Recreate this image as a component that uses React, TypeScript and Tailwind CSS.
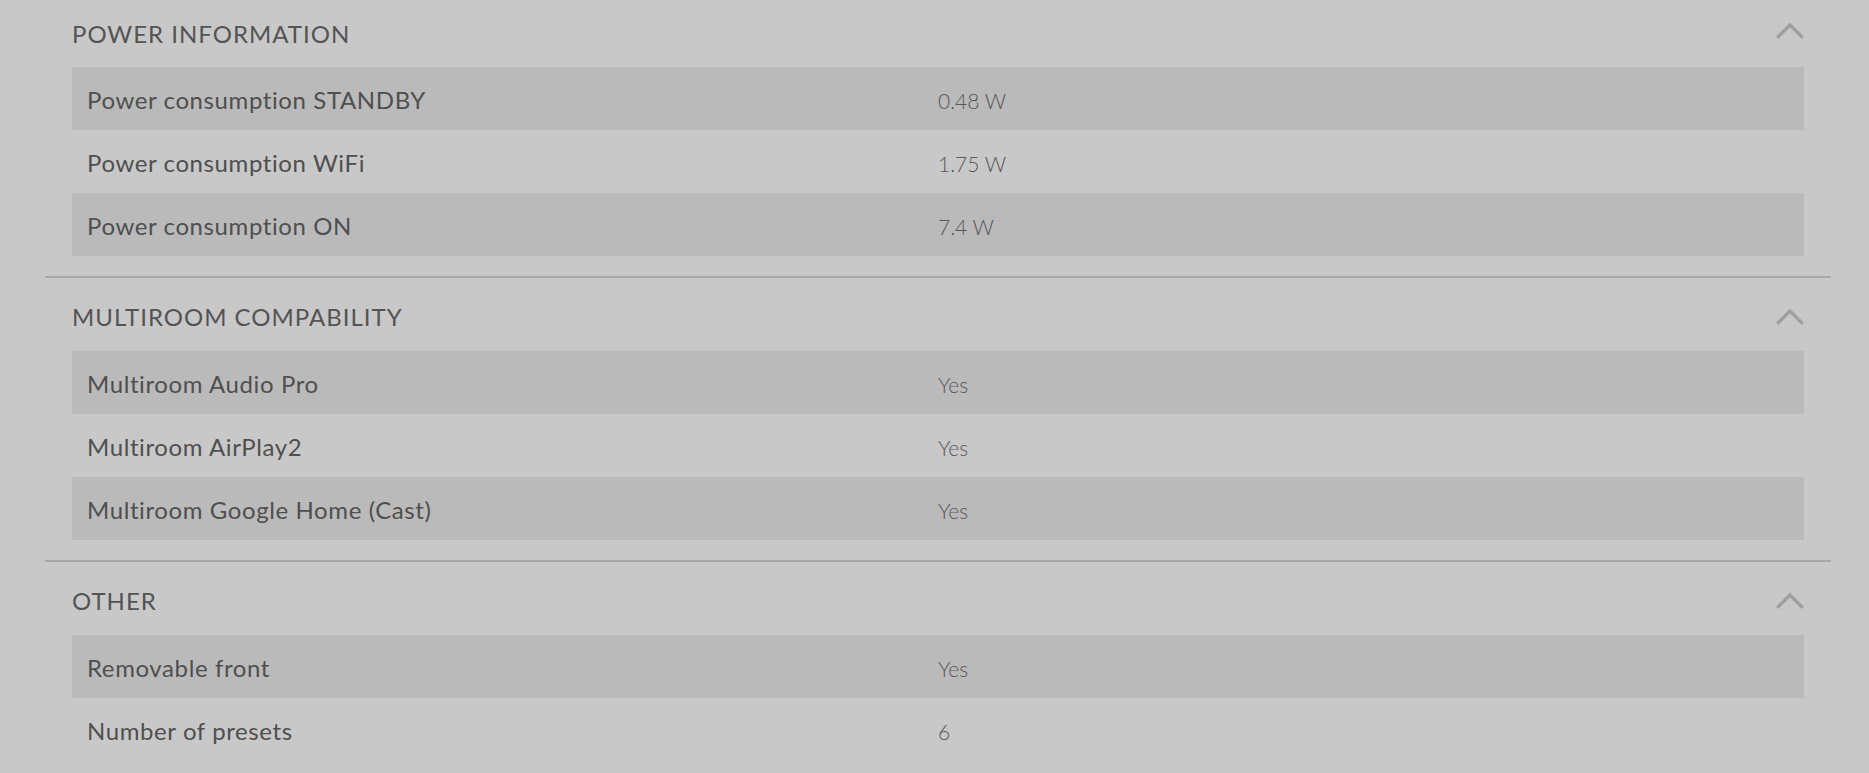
import React from "react";

interface SpecRow {
  label: string;
  value: string;
}

interface SpecSection {
  title: string;
  rows: SpecRow[];
}

const sections: SpecSection[] = [
  {
    title: "POWER INFORMATION",
    rows: [
      { label: "Power consumption STANDBY", value: "0.48 W" },
      { label: "Power consumption WiFi", value: "1.75 W" },
      { label: "Power consumption ON", value: "7.4 W" },
    ],
  },
  {
    title: "MULTIROOM COMPABILITY",
    rows: [
      { label: "Multiroom Audio Pro", value: "Yes" },
      { label: "Multiroom AirPlay2", value: "Yes" },
      { label: "Multiroom Google Home (Cast)", value: "Yes" },
    ],
  },
  {
    title: "OTHER",
    rows: [
      { label: "Removable front", value: "Yes" },
      { label: "Number of presets", value: "6" },
    ],
  },
];

const ChevronUp: React.FC = () => (
  <svg width="28" height="18" viewBox="0 0 28 18" fill="none" className="shrink-0">
    <polyline
      points="2.5,15.5 14,4 25.5,15.5"
      stroke="#a0a0a0"
      strokeWidth="3.5"
      strokeLinecap="square"
    />
  </svg>
);

const Section: React.FC<{ section: SpecSection; first?: boolean; last?: boolean }> = ({
  section,
  first,
  last,
}) => {
  return (
    <section className={last ? "" : "border-b-2 border-[#a8a8a8] pb-[20px]"}>
      <div
        className={`flex items-start justify-between px-[27px] ${first ? "h-[67px]" : "h-[73px]"}`}
      >
        <h3
          className={`text-[24px] leading-[23px] tracking-[1px] text-[#545454] font-normal ${first ? "pt-[22px]" : "pt-[27px]"}`}
        >
          {section.title}
        </h3>
        <div className={first ? "pt-[21px]" : "pt-[29px]"}>
          <ChevronUp />
        </div>
      </div>
      <div className="px-[27px]">
        {section.rows.map((row, i) => (
          <div
            key={row.label}
            className={`flex items-baseline h-[63px] pt-[21px] px-[15px] ${i % 2 === 0 ? "bg-[#bababa]" : ""}`}
          >
            <div className="w-1/2 text-[24px] leading-[23px] tracking-[0.6px] text-[#4f4f4f]">
              {row.label}
            </div>
            <div className="w-1/2 text-[21px] leading-[23px] font-light text-[#585858]">
              {row.value}
            </div>
          </div>
        ))}
      </div>
    </section>
  );
};

export default function App() {
  return (
    <div
      className="h-[773px] w-full overflow-hidden bg-[#c8c8c8] pl-[45px] pr-[38px]"
      style={{ fontFamily: "Lato, 'Noto Sans', sans-serif" }}
    >
      {sections.map((s, i) => (
        <Section key={s.title} section={s} first={i === 0} last={i === sections.length - 1} />
      ))}
    </div>
  );
}
